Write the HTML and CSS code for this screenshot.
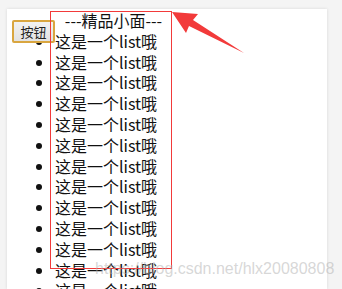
FILE: index.html
```html
<!DOCTYPE html>
<html lang="en">
<head>
    <meta charset="UTF-8">
    <meta name="viewport" content="width=device-width, initial-scale=1.0">
    <title>精品小面</title>
    <link rel="stylesheet" href="styles.css">
</head>
<body>
    <div class="page">
        <button class="btn">按钮</button>
        <div class="menu">
            <div class="title">---精品小面---</div>
            <ul class="list">
                <li>这是一个list哦</li>
                <li>这是一个list哦</li>
                <li>这是一个list哦</li>
                <li>这是一个list哦</li>
                <li>这是一个list哦</li>
                <li>这是一个list哦</li>
                <li>这是一个list哦</li>
                <li>这是一个list哦</li>
                <li>这是一个list哦</li>
                <li>这是一个list哦</li>
                <li>这是一个list哦</li>
                <li>这是一个list哦</li>
                <li>这是一个list哦</li>
                <li>这是一个list哦</li>
            </ul>
        </div>
        <div class="mark"></div>
        <svg class="arrow" width="80" height="50" viewBox="170 10 80 50">
            <polygon points="172,12 198,14 193,20 244,53 189,26 186,33" fill="#f23a3a"/>
        </svg>
        <div class="watermark">https://blog.csdn.net/hlx20080808</div>
    </div>
</body>
</html>
```

FILE: styles.css
```css
body {
    margin: 0;
    height: 289px;
    background-color: #f4f4f4;
    font-family: "Noto Sans CJK SC", "Noto Sans", sans-serif;
    overflow: hidden;
}
.page {
    position: relative;
    margin: 9px 0 0 7px;
    width: 320px;
    height: 280px;
    background-color: white;
    box-shadow: 0 0 3px rgba(0, 0, 0, 0.12);
}
.btn {
    position: absolute;
    left: 5px;
    top: 11px;
    width: 43px;
    height: 23px;
    padding: 0;
    font-family: "Noto Sans CJK SC", sans-serif;
    font-size: 13px;
    color: #222;
    background: linear-gradient(#f2f2f2, #e2e2e2);
    border: 2px solid #d9a640;
    border-radius: 2px;
}
.menu {
    padding: 1px 0 0 48px;
    width: 117px;
    font-size: 16px;
    line-height: 20.8px;
    color: #111;
}
.title {
    text-align: center;
}
.list {
    margin: 0;
    padding: 0;
}
.mark {
    position: absolute;
    left: 43px;
    top: 2px;
    width: 120px;
    height: 256px;
    border: 1px solid #f23a3a;
}
.arrow {
    position: absolute;
    left: 163px;
    top: 1px;
}
.watermark {
    position: absolute;
    left: 88px;
    top: 251px;
    white-space: nowrap;
    font-family: "Liberation Sans", Arial, sans-serif;
    font-size: 16px;
    color: rgba(175, 175, 175, 0.5);
}
```
